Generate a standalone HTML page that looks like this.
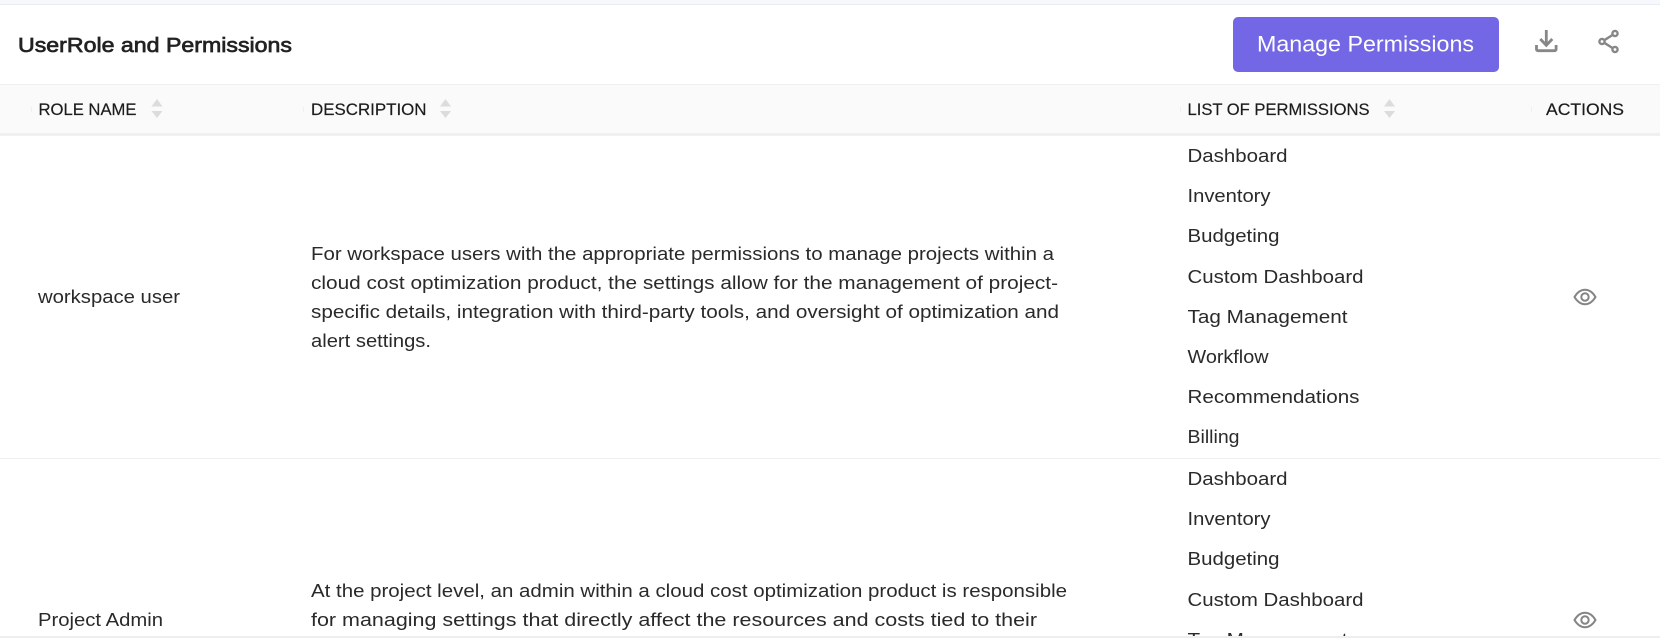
<!DOCTYPE html>
<html><head><meta charset="utf-8"><style>
html,body{margin:0;padding:0;background:#fff;width:1660px;height:638px;overflow:hidden}
svg{display:block}
text{font-family:"Liberation Sans",sans-serif;font-size:18.5px;fill:#2a2a2a}
.h{font-size:17px;fill:#1c1c1c;stroke:#1c1c1c;stroke-width:.2px}
</style></head><body>
<svg width="1660" height="638" viewBox="0 0 1660 638" xmlns="http://www.w3.org/2000/svg">
<rect width="1660" height="638" fill="#fff"/>
<rect width="1660" height="4" fill="#f6f8fc"/>
<rect y="4" width="1660" height="1" fill="#e9edf3"/>
<text x="18" y="52" textLength="274" lengthAdjust="spacingAndGlyphs" style="font-size:20.5px;fill:#222;stroke:#222;stroke-width:.7px">UserRole and Permissions</text>
<rect x="1233" y="17" width="266" height="55" rx="5" fill="#7367e6"/>
<text x="1257" y="51.500" textLength="217" lengthAdjust="spacingAndGlyphs" style="font-size:22.5px;fill:#fff">Manage Permissions</text>
<g fill="none" stroke="#878787" stroke-width="2.800">
<path d="M1546.300 30V45M1540.300 39l6 6.300 6-6.300"/>
<path d="M1536.500 45v4.200a1.500 1.500 0 0 0 1.500 1.500h16.600a1.500 1.500 0 0 0 1.500-1.500V45"/>
</g>
<g fill="none" stroke="#878787" stroke-width="2.400">
<circle cx="1615" cy="33.500" r="2.600"/><circle cx="1615" cy="49.500" r="2.600"/><circle cx="1602" cy="41.500" r="2.600"/>
<path d="M1604.300 40.200l8.400-5.300M1604.300 42.800l8.400 5.300"/>
</g>
<rect y="84" width="1660" height="49" fill="#fafafa"/>
<rect y="84" width="1660" height="1" fill="#f0f0f0"/>
<rect y="133" width="1660" height="3" fill="#f0f0f0"/>
<g fill="#f0f0f0"><rect x="31" y="107" width="1" height="5"/><rect x="303" y="107" width="1" height="5"/><rect x="1180" y="107" width="1" height="5"/><rect x="1531" y="107" width="1" height="5"/></g>
<text class="h" x="38.500" y="115" textLength="98" lengthAdjust="spacingAndGlyphs">ROLE NAME</text>
<text class="h" x="311" y="115" textLength="115.500" lengthAdjust="spacingAndGlyphs">DESCRIPTION</text>
<text class="h" x="1187.500" y="115" textLength="182" lengthAdjust="spacingAndGlyphs">LIST OF PERMISSIONS</text>
<text class="h" x="1546" y="115" textLength="78" lengthAdjust="spacingAndGlyphs">ACTIONS</text>
<g fill="#dcdcdc">
<path d="M151.500 106.500l5.500-7.500 5.500 7.500zM151.500 111l5.500 7 5.500-7z"/>
<path d="M440 106.500l5.500-7.500 5.500 7.500zM440 111l5.500 7 5.500-7z"/>
<path d="M1384 106.500l5.500-7.500 5.500 7.500zM1384 111l5.500 7 5.500-7z"/>
</g>
<text x="38" y="303" textLength="142" lengthAdjust="spacingAndGlyphs">workspace user</text>
<text x="311" y="260" textLength="743" lengthAdjust="spacingAndGlyphs">For workspace users with the appropriate permissions to manage projects within a</text>
<text x="311" y="289" textLength="747" lengthAdjust="spacingAndGlyphs">cloud cost optimization product, the settings allow for the management of project-</text>
<text x="311" y="318" textLength="748" lengthAdjust="spacingAndGlyphs">specific details, integration with third-party tools, and oversight of optimization and</text>
<text x="311" y="347" textLength="120" lengthAdjust="spacingAndGlyphs">alert settings.</text>
<text x="1187.500" y="162" textLength="100" lengthAdjust="spacingAndGlyphs">Dashboard</text>
<text x="1187.500" y="202" textLength="83" lengthAdjust="spacingAndGlyphs">Inventory</text>
<text x="1187.500" y="242" textLength="92" lengthAdjust="spacingAndGlyphs">Budgeting</text>
<text x="1187.500" y="283" textLength="176" lengthAdjust="spacingAndGlyphs">Custom Dashboard</text>
<text x="1187.500" y="323" textLength="160" lengthAdjust="spacingAndGlyphs">Tag Management</text>
<text x="1187.500" y="363" textLength="81" lengthAdjust="spacingAndGlyphs">Workflow</text>
<text x="1187.500" y="403" textLength="172" lengthAdjust="spacingAndGlyphs">Recommendations</text>
<text x="1187.500" y="443" textLength="52" lengthAdjust="spacingAndGlyphs">Billing</text>
<g fill="none" stroke="#858585" stroke-width="2">
<path d="M1574.500 297c3-5 6.500-7.200 10.500-7.200s7.500 2.200 10.500 7.200c-3 5-6.500 7.200-10.500 7.200s-7.500-2.200-10.500-7.200z"/><circle cx="1585" cy="297" r="3.700"/>
<path d="M1574.500 620c3-5 6.500-7.200 10.500-7.200s7.500 2.200 10.500 7.200c-3 5-6.500 7.200-10.500 7.200s-7.500-2.200-10.500-7.200z"/><circle cx="1585" cy="620" r="3.700"/>
</g>
<rect y="458" width="1660" height="1" fill="#f0f0f0"/>
<text x="38" y="626" textLength="125" lengthAdjust="spacingAndGlyphs">Project Admin</text>
<text x="311" y="597" textLength="756" lengthAdjust="spacingAndGlyphs">At the project level, an admin within a cloud cost optimization product is responsible</text>
<text x="311" y="626" textLength="726" lengthAdjust="spacingAndGlyphs">for managing settings that directly affect the resources and costs tied to their</text>
<text x="1187.500" y="485" textLength="100" lengthAdjust="spacingAndGlyphs">Dashboard</text>
<text x="1187.500" y="525" textLength="83" lengthAdjust="spacingAndGlyphs">Inventory</text>
<text x="1187.500" y="565" textLength="92" lengthAdjust="spacingAndGlyphs">Budgeting</text>
<text x="1187.500" y="606" textLength="176" lengthAdjust="spacingAndGlyphs">Custom Dashboard</text>
<text x="1187.500" y="646" textLength="160" lengthAdjust="spacingAndGlyphs">Tag Management</text>
<rect y="636" width="1660" height="2" fill="#eeeeee"/>
</svg>
</body></html>
